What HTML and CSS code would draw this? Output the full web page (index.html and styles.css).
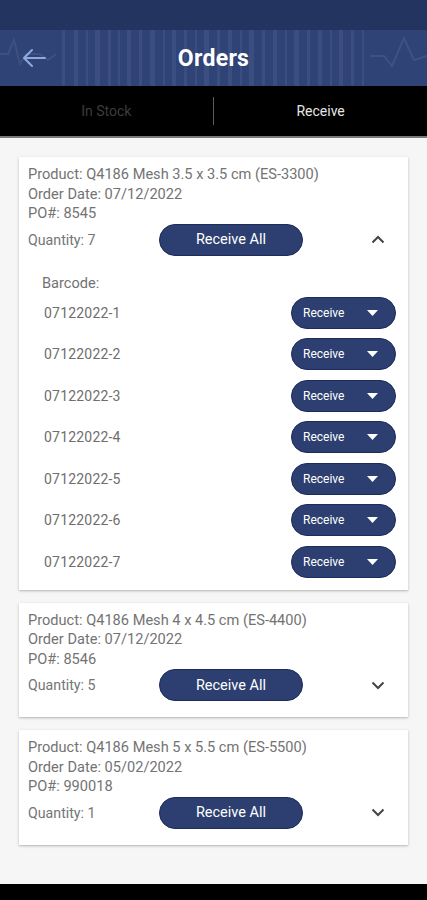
FILE: index.html
```html
<!DOCTYPE html>
<html>
<head>
<meta charset="utf-8">
<link rel="stylesheet" href="styles.css">
</head>
<body>
<div class="statusbar"></div>
<header class="appbar">
  <svg class="appbar-bg" width="427" height="56" viewBox="0 0 427 56" preserveAspectRatio="none">
    <g fill="#ffffff" fill-opacity="0.06">
      <rect x="62" y="0" width="3" height="56"/>
      <rect x="74" y="0" width="4" height="56"/>
      <rect x="86" y="0" width="2" height="56"/>
      <rect x="95" y="0" width="5" height="56"/>
      <rect x="108" y="0" width="3" height="56"/>
      <rect x="118" y="0" width="2" height="56"/>
      <rect x="127" y="0" width="4" height="56"/>
      <rect x="139" y="0" width="3" height="56"/>
      <rect x="150" y="0" width="5" height="56"/>
      <rect x="163" y="0" width="2" height="56"/>
      <rect x="172" y="0" width="4" height="56"/>
      <rect x="184" y="0" width="3" height="56"/>
      <rect x="195" y="0" width="2" height="56"/>
      <rect x="204" y="0" width="5" height="56"/>
      <rect x="217" y="0" width="3" height="56"/>
      <rect x="228" y="0" width="4" height="56"/>
      <rect x="240" y="0" width="2" height="56"/>
      <rect x="249" y="0" width="5" height="56"/>
      <rect x="262" y="0" width="3" height="56"/>
      <rect x="273" y="0" width="4" height="56"/>
      <rect x="285" y="0" width="2" height="56"/>
      <rect x="294" y="0" width="5" height="56"/>
      <rect x="307" y="0" width="3" height="56"/>
      <rect x="318" y="0" width="4" height="56"/>
      <rect x="330" y="0" width="2" height="56"/>
      <rect x="339" y="0" width="4" height="56"/>
      <rect x="351" y="0" width="3" height="56"/>
      <rect x="362" y="0" width="2" height="56"/>
    </g>
    <polyline points="0,24 8,24 14,10 20,34 26,24 40,24 48,30 56,24" fill="none" stroke="#ffffff" stroke-opacity="0.07" stroke-width="2"/>
    <polyline points="370,26 384,26 392,36 404,8 414,30 427,26" fill="none" stroke="#ffffff" stroke-opacity="0.08" stroke-width="2"/>
  </svg>
  <svg class="back" width="26" height="20" viewBox="0 0 26 20">
    <path d="M24 10 H3 M11 2 L3 10 L11 18" fill="none" stroke="#8eaadc" stroke-width="2" stroke-linecap="round" stroke-linejoin="round"/>
  </svg>
  <h1 class="title">Orders</h1>
</header>
<nav class="tabs">
  <div class="tab tab-inactive">In Stock</div>
  <div class="tab-divider"></div>
  <div class="tab tab-active">Receive</div>
</nav>
<main class="content">
  <section class="card">
    <div class="info">Product: Q4186 Mesh 3.5 x 3.5 cm (ES-3300)</div>
    <div class="info">Order Date: 07/12/2022</div>
    <div class="info">PO#: 8545</div>
    <div class="qty-row">
      <div class="qty">Quantity: 7</div>
      <button class="btn-all">Receive All</button>
      <div class="chev-wrap">
        <svg class="chev" width="14" height="9" viewBox="0 0 14 9"><path d="M1.5 7.5 L7 2 L12.5 7.5" fill="none" stroke="#444" stroke-width="2"/></svg>
      </div>
    </div>
    <div class="barcode-label">Barcode:</div>
    <div class="barcode-list">
      <div class="bc-row"><span class="bc">07122022-1</span><button class="btn-rcv"><span>Receive</span><svg width="11" height="6" viewBox="0 0 11 6"><path d="M0 0 H11 L5.5 6 Z" fill="#fff"/></svg></button></div>
      <div class="bc-row"><span class="bc">07122022-2</span><button class="btn-rcv"><span>Receive</span><svg width="11" height="6" viewBox="0 0 11 6"><path d="M0 0 H11 L5.5 6 Z" fill="#fff"/></svg></button></div>
      <div class="bc-row"><span class="bc">07122022-3</span><button class="btn-rcv"><span>Receive</span><svg width="11" height="6" viewBox="0 0 11 6"><path d="M0 0 H11 L5.5 6 Z" fill="#fff"/></svg></button></div>
      <div class="bc-row"><span class="bc">07122022-4</span><button class="btn-rcv"><span>Receive</span><svg width="11" height="6" viewBox="0 0 11 6"><path d="M0 0 H11 L5.5 6 Z" fill="#fff"/></svg></button></div>
      <div class="bc-row"><span class="bc">07122022-5</span><button class="btn-rcv"><span>Receive</span><svg width="11" height="6" viewBox="0 0 11 6"><path d="M0 0 H11 L5.5 6 Z" fill="#fff"/></svg></button></div>
      <div class="bc-row"><span class="bc">07122022-6</span><button class="btn-rcv"><span>Receive</span><svg width="11" height="6" viewBox="0 0 11 6"><path d="M0 0 H11 L5.5 6 Z" fill="#fff"/></svg></button></div>
      <div class="bc-row"><span class="bc">07122022-7</span><button class="btn-rcv"><span>Receive</span><svg width="11" height="6" viewBox="0 0 11 6"><path d="M0 0 H11 L5.5 6 Z" fill="#fff"/></svg></button></div>
    </div>
  </section>
  <section class="card card-closed">
    <div class="info">Product: Q4186 Mesh 4 x 4.5 cm (ES-4400)</div>
    <div class="info">Order Date: 07/12/2022</div>
    <div class="info">PO#: 8546</div>
    <div class="qty-row">
      <div class="qty">Quantity: 5</div>
      <button class="btn-all">Receive All</button>
      <div class="chev-wrap">
        <svg class="chev" width="14" height="9" viewBox="0 0 14 9"><path d="M1.5 1.5 L7 7 L12.5 1.5" fill="none" stroke="#444" stroke-width="2"/></svg>
      </div>
    </div>
  </section>
  <section class="card card-closed">
    <div class="info">Product: Q4186 Mesh 5 x 5.5 cm (ES-5500)</div>
    <div class="info">Order Date: 05/02/2022</div>
    <div class="info">PO#: 990018</div>
    <div class="qty-row">
      <div class="qty">Quantity: 1</div>
      <button class="btn-all">Receive All</button>
      <div class="chev-wrap">
        <svg class="chev" width="14" height="9" viewBox="0 0 14 9"><path d="M1.5 1.5 L7 7 L12.5 1.5" fill="none" stroke="#444" stroke-width="2"/></svg>
      </div>
    </div>
  </section>
</main>
<div class="navbar"></div>
</body>
</html>
```

FILE: styles.css
```css
* { box-sizing: border-box; }
html, body {
  margin: 0;
  padding: 0;
  height: 900px;
  overflow: hidden;
}
body {
  font-family: Roboto, "Liberation Sans", sans-serif;
  background: #f6f6f6;
  display: flex;
  flex-direction: column;
}
.statusbar {
  height: 30px;
  background: #233461;
  flex: none;
}
.appbar {
  position: relative;
  height: 56px;
  background: #2f4377;
  display: flex;
  align-items: center;
  justify-content: center;
  flex: none;
}
.appbar-bg {
  position: absolute;
  left: 0;
  top: 0;
}
.back {
  position: absolute;
  left: 21px;
  top: 18px;
}
.title {
  position: relative;
  margin: 0;
  color: #fff;
  font-size: 23px;
  font-weight: 700;
  letter-spacing: 0.3px;
  margin-top: 1px;
}
.tabs {
  height: 52px;
  background: #000;
  display: flex;
  align-items: center;
  border-bottom: 2px solid #7a7a7a;
  flex: none;
}
.tab {
  flex: 1;
  text-align: center;
  font-size: 14px;
}
.tab-inactive { color: #3c3c3c; }
.tab-active { color: #e6e6e6; }
.tab-divider {
  width: 1.5px;
  height: 28px;
  background: #5a5a5a;
}
.content {
  flex: 1;
  padding: 19px 19px 0;
  display: flex;
  flex-direction: column;
  gap: 13px;
}
.card {
  background: #fff;
  box-shadow: 0 1px 3px rgba(0,0,0,0.2), 0 1px 1px rgba(0,0,0,0.07);
  padding: 8px 12px 12px 9px;
}
.card-closed { padding-bottom: 16px; }
.info {
  font-size: 14.6px;
  line-height: 19.5px;
  color: #737373;
}
.qty-row {
  display: flex;
  align-items: center;
  height: 32px;
}
.qty {
  width: 131px;
  font-size: 14.2px;
  color: #757575;
}
.btn-all {
  width: 144px;
  height: 32px;
  border-radius: 16px;
  background: #2c3f70;
  border: 1.5px solid #1d2b5a;
  color: #fff;
  font-family: Roboto, "Liberation Sans", sans-serif;
  font-size: 14.5px;
  padding: 0;
}
.chev-wrap {
  flex: 1;
  display: flex;
  justify-content: flex-end;
  padding-right: 11px;
}
.barcode-label {
  margin-top: 17px;
  padding-left: 14px;
  font-size: 14.6px;
  line-height: 20px;
  color: #737373;
}
.barcode-list {
  margin-top: 4px;
  display: flex;
  flex-direction: column;
  gap: 9.5px;
}
.bc-row {
  display: flex;
  align-items: center;
  justify-content: space-between;
  height: 32px;
  padding-left: 16px;
}
.bc {
  font-size: 14px;
  color: #6e6e6e;
  letter-spacing: 0.2px;
}
.btn-rcv {
  width: 105px;
  height: 32px;
  border-radius: 16px;
  background: #2c3f70;
  border: 1.5px solid #1d2b5a;
  color: #fff;
  font-family: Roboto, "Liberation Sans", sans-serif;
  font-size: 12px;
  display: flex;
  align-items: center;
  justify-content: space-between;
  padding: 0 17px 0 11px;
}
.navbar {
  height: 16px;
  background: #000;
  flex: none;
}
```
